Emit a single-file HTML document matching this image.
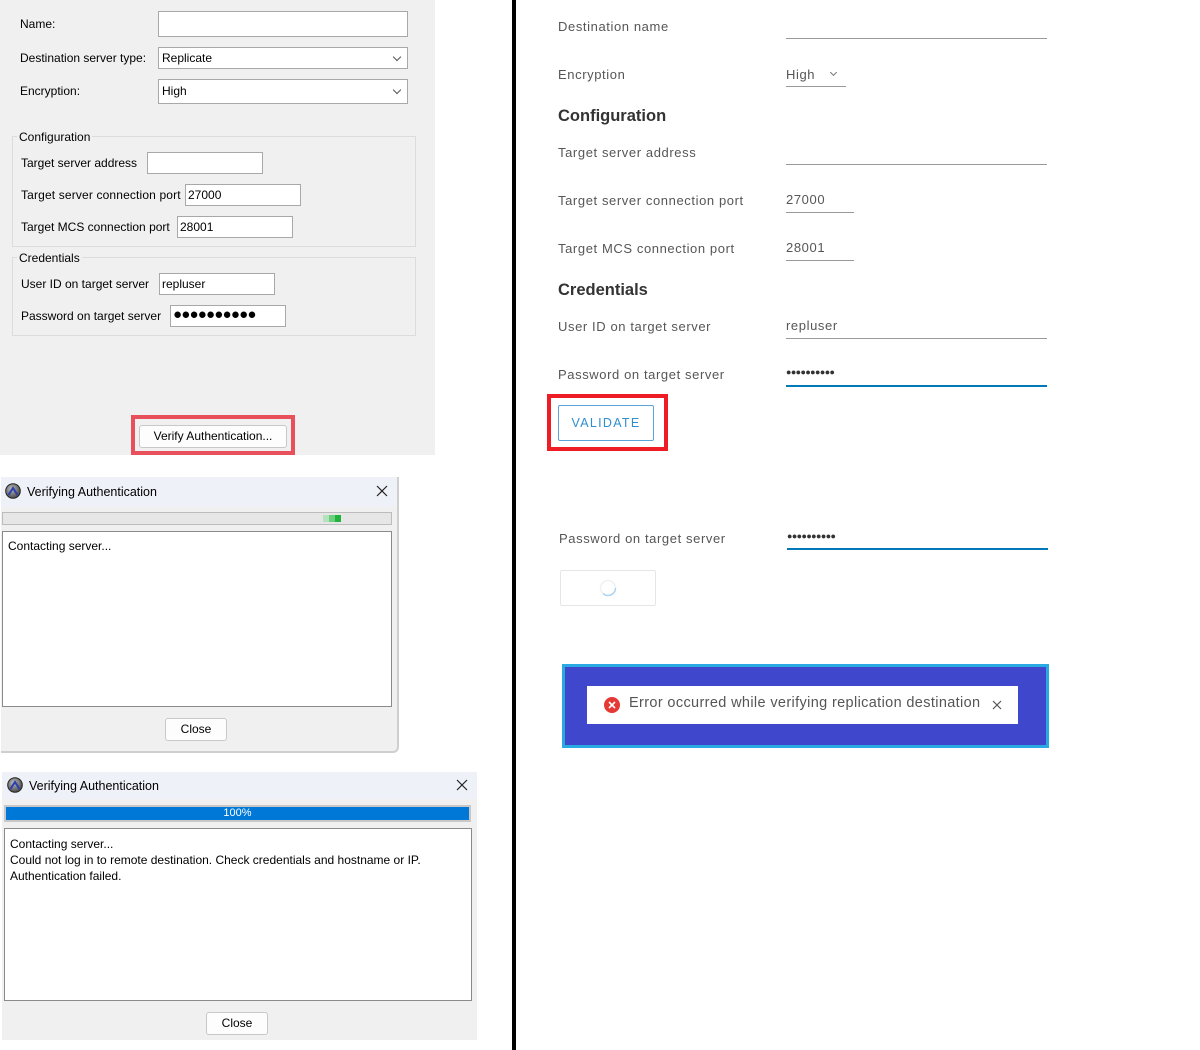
<!DOCTYPE html>
<html><head><meta charset="utf-8">
<style>
*{margin:0;padding:0;box-sizing:border-box}
body{width:1200px;height:1050px;background:#fff;position:relative;overflow:hidden;font-family:"Liberation Sans",Tahoma,sans-serif;font-size:12px;color:#000}
.a{position:absolute;white-space:nowrap}
.box{position:absolute;background:#fff;border:1px solid #a8a8a8}
.fs{position:absolute;border:1px solid #dcdcdc}
.legend{position:absolute;background:#f0f0f0;padding:0 2px;font-size:12px}
.chev{position:absolute;width:6px;height:6px;border-right:1px solid #555;border-bottom:1px solid #555;transform:rotate(45deg)}
.r{color:#565656;font-size:13px;letter-spacing:0.6px}
.line{position:absolute;height:1px;background:#9a9a9a}
.wbtn{position:absolute;background:#fdfdfd;border:1px solid #c8c8c8;border-radius:3px;text-align:center;font-size:12px}
</style></head><body>
<div class="a" style="left:0;top:0;width:435px;height:455px;background:#f0f0f0"></div>
<div class="a" style="left:20px;top:17px">Name:</div>
<div class="box" style="left:158px;top:11px;width:250px;height:26px"></div>
<div class="a" style="left:20px;top:51px">Destination server type:</div>
<div class="box" style="left:158px;top:47px;width:250px;height:22px"></div>
<div class="a" style="left:162px;top:51px">Replicate</div>
<div class="chev" style="left:394px;top:54px"></div>
<div class="a" style="left:20px;top:84px">Encryption:</div>
<div class="box" style="left:158px;top:79px;width:250px;height:25px"></div>
<div class="a" style="left:162px;top:84px">High</div>
<div class="chev" style="left:394px;top:87px"></div>

<div class="fs" style="left:12px;top:136px;width:404px;height:111px"></div>
<div class="legend" style="left:17px;top:130px">Configuration</div>
<div class="a" style="left:21px;top:156px">Target server address</div>
<div class="box" style="left:147px;top:152px;width:116px;height:22px"></div>
<div class="a" style="left:21px;top:188px;letter-spacing:0.15px">Target server connection port</div>
<div class="box" style="left:185px;top:184px;width:116px;height:22px"></div>
<div class="a" style="left:188px;top:188px">27000</div>
<div class="a" style="left:21px;top:220px">Target MCS connection port</div>
<div class="box" style="left:177px;top:216px;width:116px;height:22px"></div>
<div class="a" style="left:180px;top:220px">28001</div>

<div class="fs" style="left:12px;top:257px;width:404px;height:79px"></div>
<div class="legend" style="left:17px;top:251px">Credentials</div>
<div class="a" style="left:21px;top:277px">User ID on target server</div>
<div class="box" style="left:159px;top:273px;width:116px;height:22px"></div>
<div class="a" style="left:162px;top:277px">repluser</div>
<div class="a" style="left:21px;top:309px">Password on target server</div>
<div class="box" style="left:170px;top:305px;width:116px;height:22px"></div>
<div class="a" style="left:173px;top:306px;font-size:15px;letter-spacing:-0.8px">●●●●●●●●●●</div>

<div class="a" style="left:131px;top:415px;width:164px;height:40px;border:4px solid #e8505b"></div>
<div class="wbtn" style="left:139px;top:425px;width:148px;height:23px;line-height:21px">Verify Authentication...</div>

<div class="a" style="left:1px;top:477px;width:398px;height:276px;background:#f0f0f0;border-right:2px solid #cfcfcf;border-bottom:2px solid #cfcfcf;border-radius:0 0 6px 0"></div>
<div class="a" style="left:1px;top:477px;width:396px;height:30px;background:#eef1f8"></div>
<svg class="a" style="left:5px;top:483px" width="16" height="16" viewBox="0 0 16 16"><defs><radialGradient id="g" cx="0.4" cy="0.35" r="0.7"><stop offset="0" stop-color="#bbb"/><stop offset="1" stop-color="#444"/></radialGradient></defs><circle cx="8" cy="8" r="7.3" fill="url(#g)" stroke="#222"/><path d="M3.5 12 L8 5 L12.5 12" fill="none" stroke="#2a3fb0" stroke-width="2"/></svg>
<div class="a" style="left:27px;top:485px;font-size:12.5px">Verifying Authentication</div>
<svg class="a" style="left:376px;top:485px" width="12" height="12"><path d="M1 1L11 11M11 1L1 11" stroke="#222" stroke-width="1.2"/></svg>
<div class="a" style="left:2px;top:512px;width:390px;height:13px;background:#e6e6e6;border:1px solid #bcbcbc"></div>
<div class="a" style="left:323px;top:515px;width:6px;height:7px;background:#b3e2bd"></div>
<div class="a" style="left:329px;top:515px;width:6px;height:7px;background:#6ccf80"></div>
<div class="a" style="left:335px;top:515px;width:6px;height:7px;background:#1fb33e"></div>
<div class="box" style="left:2px;top:531px;width:390px;height:176px;border-color:#8a8a8a"></div>
<div class="a" style="left:8px;top:539px">Contacting server...</div>
<div class="wbtn" style="left:165px;top:718px;width:62px;height:23px;line-height:21px">Close</div>

<div class="a" style="left:2px;top:772px;width:475px;height:268px;background:#f0f0f0"></div>
<div class="a" style="left:2px;top:772px;width:475px;height:27px;background:#eef1f8"></div>
<svg class="a" style="left:7px;top:777px" width="16" height="16" viewBox="0 0 16 16"><circle cx="8" cy="8" r="7.3" fill="url(#g)" stroke="#222"/><path d="M3.5 12 L8 5 L12.5 12" fill="none" stroke="#2a3fb0" stroke-width="2"/></svg>
<div class="a" style="left:29px;top:779px;font-size:12.5px">Verifying Authentication</div>
<svg class="a" style="left:456px;top:779px" width="12" height="12"><path d="M1 1L11 11M11 1L1 11" stroke="#222" stroke-width="1.2"/></svg>
<div class="a" style="left:4px;top:805px;width:467px;height:17px;background:#0078d7;border:2px solid #c8c8c8;color:#fff;text-align:center;font-size:11px;line-height:13px">100%</div>
<div class="box" style="left:4px;top:828px;width:468px;height:173px;border-color:#8a8a8a"></div>
<div class="a" style="left:10px;top:836px;line-height:16px">Contacting server...<br>Could not log in to remote destination. Check credentials and hostname or IP.<br>Authentication failed.</div>
<div class="wbtn" style="left:206px;top:1012px;width:62px;height:23px;line-height:21px">Close</div>

<div class="a" style="left:512px;top:0;width:4px;height:1050px;background:#000"></div>

<div class="a r" style="left:558px;top:19px">Destination name</div>
<div class="line" style="left:786px;top:38px;width:261px"></div>
<div class="a r" style="left:558px;top:67px">Encryption</div>
<div class="a r" style="left:786px;top:67px">High</div>
<div class="chev" style="left:831px;top:70px;width:5px;height:5px;border-color:#777"></div>
<div class="line" style="left:786px;top:86px;width:60px"></div>
<div class="a" style="left:558px;top:107px;font-size:16.5px;color:#333;font-weight:bold">Configuration</div>
<div class="a r" style="left:558px;top:145px">Target server address</div>
<div class="line" style="left:786px;top:164px;width:261px"></div>
<div class="a r" style="left:558px;top:193px">Target server connection port</div>
<div class="a r" style="left:786px;top:192px">27000</div>
<div class="line" style="left:786px;top:212px;width:68px"></div>
<div class="a r" style="left:558px;top:241px">Target MCS connection port</div>
<div class="a r" style="left:786px;top:240px">28001</div>
<div class="line" style="left:786px;top:260px;width:68px"></div>
<div class="a" style="left:558px;top:281px;font-size:16.5px;color:#333;font-weight:bold">Credentials</div>
<div class="a r" style="left:558px;top:319px">User ID on target server</div>
<div class="a r" style="left:786px;top:318px">repluser</div>
<div class="line" style="left:786px;top:338px;width:261px"></div>
<div class="a r" style="left:558px;top:367px">Password on target server</div>
<div class="a" style="left:786px;top:367px;font-size:9px;color:#333;letter-spacing:-0.6px">●●●●●●●●●●</div>
<div class="a" style="left:786px;top:385px;width:261px;height:2px;background:#0079b8"></div>
<div class="a" style="left:547px;top:394px;width:121px;height:57px;border:4px solid #ee1c24"></div>
<div class="a" style="left:558px;top:405px;width:96px;height:36px;border:1px solid #5aa3d8;border-radius:2px;color:#2f8fcf;font-size:12.5px;letter-spacing:1.3px;text-align:center;line-height:35px">VALIDATE</div>

<div class="a r" style="left:559px;top:531px">Password on target server</div>
<div class="a" style="left:787px;top:531px;font-size:9px;color:#333;letter-spacing:-0.6px">●●●●●●●●●●</div>
<div class="a" style="left:787px;top:548px;width:261px;height:2px;background:#0079b8"></div>
<div class="a" style="left:560px;top:570px;width:96px;height:36px;border:1px solid #e6e6e6;border-radius:2px"></div>
<svg class="a" style="left:599px;top:579px" width="18" height="18" viewBox="0 0 18 18"><circle cx="9" cy="9" r="7.5" fill="none" stroke="#eef2f6" stroke-width="1.5"/><path d="M16.5 9 A7.5 7.5 0 0 1 4 14.6" fill="none" stroke="#a9d2ee" stroke-width="1.5"/></svg>

<div class="a" style="left:562px;top:664px;width:487px;height:84px;background:#3f48cc;border:3px solid #29aae3"></div>
<div class="a" style="left:587px;top:686px;width:431px;height:38px;background:#fff"></div>
<svg class="a" style="left:604px;top:697px" width="16" height="16" viewBox="0 0 16 16"><circle cx="8" cy="8" r="8" fill="#e53935"/><path d="M5 5 L11 11 M11 5 L5 11" stroke="#fff" stroke-width="1.6"/></svg>
<div class="a" style="left:629px;top:695px;font-size:14.5px;color:#555;letter-spacing:0.36px">Error occurred while verifying replication destination</div>
<svg class="a" style="left:992px;top:700px" width="10" height="10"><path d="M1 1L9 9M9 1L1 9" stroke="#555" stroke-width="1.2"/></svg>
</body></html>
